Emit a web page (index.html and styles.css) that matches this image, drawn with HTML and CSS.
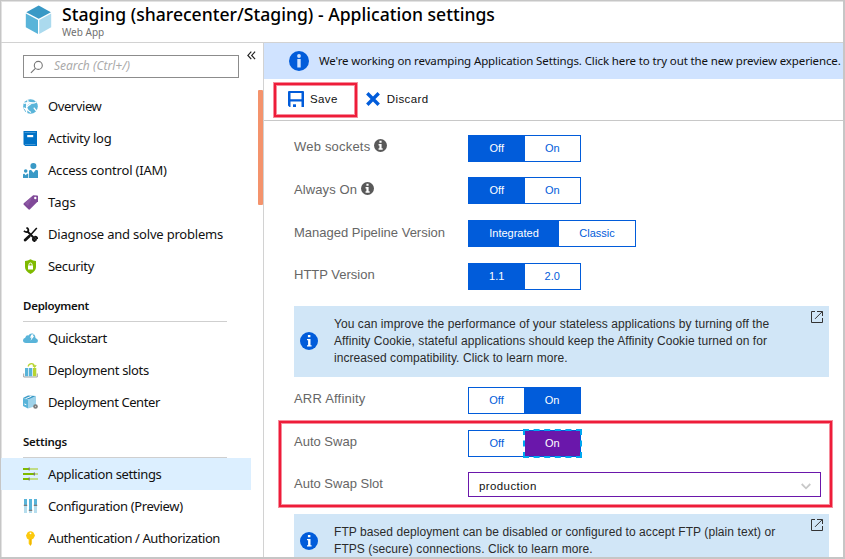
FILE: index.html
```html
<!DOCTYPE html>
<html lang="en">
<head>
<meta charset="utf-8">
<title>Staging - Application settings</title>
<link rel="stylesheet" href="styles.css">
</head>
<body>
<div class="frame">
  <header class="header">
    <svg class="logo" width="28" height="30" viewBox="0 0 28 30"><path fill="#3999c6" d="M13.700.6 25.900 7.300 13.700 13.800 1.300 7.300z"/><path fill="#59b4d9" d="M.8 8.500 13 15v14L.8 22.300z"/><path fill="#abdaee" d="M26.200 8.500 14.200 15v14l12-6.700z"/></svg>
    <div>
      <h1 class="title">Staging (sharecenter/Staging) - Application settings</h1>
      <div class="subtitle">Web App</div>
    </div>
  </header>
  <div class="body">
    <aside class="sidebar">
      <div class="search">
        <svg width="14" height="14" viewBox="0 0 14 14" fill="none" stroke="#777" stroke-width="1.100"><circle cx="8.300" cy="5.400" r="4"/><path d="M5.400 8.300.9 12.800"/></svg>
        <span>Search (Ctrl+/)</span>
      </div>
      <div class="collapse"><svg width="9" height="9" viewBox="0 0 9 9" fill="none" stroke="#222" stroke-width="1.200"><path d="M4.300.7.900 4.400l3.400 3.700M8.100.7 4.700 4.400l3.400 3.700"/></svg></div>
      <div class="scrollbar"></div>
      <nav>
        <a class="item"><svg class="ico" viewBox="0 0 15 15"><circle cx="7.500" cy="7.500" r="7.300" fill="#59b4d9"/><g stroke="#fff" fill="none"><path stroke-width="1.300" d="M1 4.500C4 2.500 8 5 13.500 12M5 .8c-1 2 0 3 5 3.200 2 0 3-.5 3-1.500M.8 9c2 .5 3 2 3 5M4 5c-1 3-.5 6 4 8.500M9 4c-3 1-5 4-6 6"/></g><circle cx="9" cy="7.500" r="2.200" fill="#59b4d9"/><circle cx="4.300" cy="4.600" r="1.500" fill="#fff"/><circle cx="3.700" cy="10.700" r="1.200" fill="#fff"/></svg><span class="s1">Overview</span></a>
        <a class="item"><svg class="ico" viewBox="0 0 15 15"><path fill="#0072c6" d="M1 0h13v15H2.200L.5 13.500V.6z"/><path fill="#fff" d="M4.200 4h6v2.200h-6z"/><path fill="#59a5dc" d="M1.600 1.200h11v.8h-11zM2 13h10.500v.7H2z"/></svg><span class="s2">Activity log</span></a>
        <a class="item"><svg class="ico" viewBox="0 0 15 15" fill="#3999c6"><circle cx="10.400" cy="3" r="3"/><path d="M6 15V8.200Q6 7 7.300 7h.9l2.200 2.800L12.700 7h1Q15 7 15 8.200V15z"/><circle cx="2.700" cy="8" r="1.800"/><path d="M0 15v-3.300q0-1 1-1h.4l1.300 1.500L4 10.700h1.300V15z"/></svg><span class="s3">Access control (IAM)</span></a>
        <a class="item"><svg class="ico" viewBox="0 0 15 15"><path fill="#804998" d="M10.200.3 14.300.4 15 1.100v5.100L7 14.300q-.8.700-1.600 0L.8 9.800q-.8-.8 0-1.600z"/><circle cx="12.300" cy="3" r="1.200" fill="#fff"/><path fill="#9a68af" d="M1.800 8 9.700 1.200 5 11z" opacity=".5"/></svg><span class="s4">Tags</span></a>
        <a class="item"><svg class="ico" viewBox="0 0 15 15" fill="none" stroke="#111"><path stroke-width="1.500" d="M13.800 1 7.500 8"/><path stroke-width="2.800" stroke-linecap="round" d="M6.200 9.200 2.200 13.100"/><path stroke-width="2" d="m4 4 9.500 9.500"/><path stroke-width="1.800" d="M3.400.9Q6 1.500 5.200 4.300 3.300 6 .9 3.900"/><path stroke-width="2" d="M10 11.200Q9.500 14 12.400 14.200M11.300 10Q14 9.200 14.200 12"/></svg><span class="s5">Diagnose and solve problems</span></a>
        <a class="item"><svg class="ico" viewBox="0 0 15 15"><path fill="#7fba00" d="M7.500.2Q10 2 13 2v6q0 4-5.500 6.900Q2 12 2 8V2q3 0 5.500-1.800z"/><path fill="#fff" d="M5 6.500h5v4H5z"/><path fill="none" stroke="#fff" d="M6 6.700V5.500Q6 4 7.500 4T9 5.500v1.200"/></svg><span class="s6">Security</span></a>
        <h2 class="group">Deployment</h2>
        <a class="item"><svg class="ico" viewBox="0 0 15 15"><path fill="#59b4d9" d="M3 12Q0 12 0 9.300q0-2 2.200-2.500Q3 4 5.500 4.400 7 2 9.500 2.500q2.700.5 3 4.500Q15 8 15 9.800 15 12 12.500 12z"/><path fill="#fff" d="m8.400 3.500 2.400-.3-1 2 1.500-.1-3.700 4.600.9-3.100-1.500.1z"/></svg><span class="s7">Quickstart</span></a>
        <a class="item"><svg class="ico" viewBox="0 0 15 15"><path fill="none" stroke="#a0a1a2" d="M.7 10.500V14h13.600v-3.500"/><path fill="#59b4d9" d="M2 5h3.300v8.200H2zM6 5h3.300v8.200H6z"/><path fill="#b8d432" d="M10 5h3.300v8.200H10z"/><path fill="none" stroke="#b8d432" stroke-width="1.100" d="M5 3.500Q6 .6 8.500.6t3.200 3M9.800 2.500l1.900 1.700 1.500-2"/></svg><span class="s8">Deployment slots</span></a>
        <a class="item"><svg class="ico" viewBox="0 0 15 15"><path fill="#3999c6" d="m0 3 5-2.500 8 .6L8 4 5 4.500z"/><path fill="#59b4d9" d="m0 3 5 1.500v9L0 11z"/><path fill="#9fd3ea" d="m5 4.500 8-3.400v10L5 13.500z"/><path stroke="#fff" fill="none" d="m2.500 3.700 6-2.500M1.300 9l2 .7"/><circle cx="12.500" cy="11.500" r="2.300" fill="#7a7a7a"/><circle cx="12.500" cy="11.500" r=".7" fill="#ccc"/></svg><span class="s9">Deployment Center</span></a>
        <h2 class="group">Settings</h2>
        <a class="item selected"><svg class="ico" viewBox="0 0 15 15"><path fill="#7fba00" d="M0 1h6v2H0zM0 6h11v2H0zM0 11h6v2H0z"/><path fill="#c0dc86" d="M6.500 1H15v2H6.500zM11.500 6H15v2h-3.500zM6.500 11H15v2H6.500z"/><path fill="#7a7a7a" d="M5.600.4h1.200v3.200H5.600zM10.700 5.400H12v3.200h-1.300zM5.600 10.400h1.200v3.200H5.600z"/></svg><span class="s10">Application settings</span></a>
        <a class="item"><svg class="ico" viewBox="0 0 15 15"><path fill="#59b4d9" d="M1 0h3v6H1zM6 0h3v11H6zM11 0h3v6h-3z"/><path fill="#b5dded" d="M1 6.500h3V14H1zM6 12h3v2H6zM11 6.500h3V14h-3z"/><path fill="#7a7a7a" d="M.8 5.700h3.400v1.200H.8zM5.800 10.700h3.400v1.200H5.800zM10.800 5.700h3.400v1.200h-3.400z"/></svg><span class="s11">Configuration (Preview)</span></a>
        <a class="item"><svg class="ico" viewBox="0 0 15 15"><path fill="#fcc90d" d="M4.500 1.500Q7.500-1.200 10.500 1.500l1.500 3-1.500 3-1.700 1v4.300L7.500 15l-1.800-2.200V8.500L4 7.500l-1-3z"/><circle cx="7.500" cy="2.300" r=".9" fill="#fff"/><path stroke="#e8a800" stroke-width=".7" d="M7.600 8v6"/></svg><span class="s12">Authentication / Authorization</span></a>
      </nav>
    </aside>
    <main class="main">
      <div class="banner">
        <svg width="20" height="20" viewBox="0 0 20 20"><circle cx="10" cy="10" r="10" fill="#015cda"/><circle cx="10" cy="5" r="1.900" fill="#d0e3ff"/><path fill="#d0e3ff" d="M8.300 8h3.400v8.500H8.300z"/></svg>
        <span>We're working on revamping Application Settings. Click here to try out the new preview experience.</span>
      </div>
      <div class="toolbar">
        <svg width="16" height="16" viewBox="0 0 16 16"><path fill="#015cda" fill-rule="evenodd" d="M1 0h14q1 0 1 1v15h-2.500v-5.500h-11V16H1.500L0 14.500V1q0-1 1-1zM2.500 2v6.300h11V2z"/><path fill="#015cda" d="M5 13.300h3V16H5z"/></svg>
        <span class="save">Save</span>
        <svg class="x" width="14" height="14" viewBox="0 0 14 14" fill="none" stroke="#015cda" stroke-width="3.400"><path d="m1.300 1.300 11.400 11.400M12.700 1.300 1.300 12.700"/></svg>
        <span class="discard">Discard</span>
        <div class="mark mark-save"></div>
      </div>
      <div class="form">
        <div class="row r1"><label class="l1">Web sockets <svg class="tip" viewBox="0 0 12 12"><circle cx="6" cy="6" r="6" fill="#595959"/><path fill="#fff" d="M5 1.700h2v1.700H5zM4.200 4.500H7v4h1V10H4.200V8.500H5V6h-.8z"/></svg></label><div class="toggle"><b class="on">Off</b><b>On</b></div></div>
        <div class="row r2"><label class="l2">Always On <svg class="tip" viewBox="0 0 12 12"><circle cx="6" cy="6" r="6" fill="#595959"/><path fill="#fff" d="M5 1.700h2v1.700H5zM4.200 4.500H7v4h1V10H4.200V8.500H5V6h-.8z"/></svg></label><div class="toggle"><b class="on">Off</b><b>On</b></div></div>
        <div class="row r3"><label class="l3">Managed Pipeline Version</label><div class="toggle wide"><b class="on">Integrated</b><b>Classic</b></div></div>
        <div class="row r4"><label class="l4">HTTP Version</label><div class="toggle"><b class="on">1.1</b><b>2.0</b></div></div>
        <div class="info">
          <svg class="i up" viewBox="0 0 18 18"><circle cx="9" cy="9" r="9" fill="#015cda"/><path fill="#fff" d="M7.900 3h2.500v2.300H7.900zM7 7h3.500v6.300h1.100v1.200H7v-1.200h1.100V8.200H7z"/></svg>
          <p>You can improve the performance of your stateless applications by turning off the<br>Affinity Cookie, stateful applications should keep the Affinity Cookie turned on for<br>increased compatibility. Click to learn more.</p>
          <svg class="ext" viewBox="0 0 12 12" fill="none" stroke="#333"><path d="M4 .5H.5v11h11V7M6 .5h5.500V5M11.200.7 4 7.900"/></svg>
        </div>
        <div class="row r5"><label class="l5">ARR Affinity</label><div class="toggle late"><b>Off</b><b class="on">On</b></div></div>
        <div class="row r6"><label class="l6">Auto Swap</label><div class="toggle"><b>Off</b><b class="on focus">On</b></div></div>
        <div class="row r7"><label class="l7">Auto Swap Slot</label><div class="select"><span>production</span><svg width="10" height="7" viewBox="0 0 10 7" fill="none" stroke="#c8c8c8" stroke-width="1.800"><path d="m.7 1 4.300 4.300L9.300 1"/></svg></div></div>
        <div class="info ftp">
          <svg class="i" viewBox="0 0 18 18"><circle cx="9" cy="9" r="9" fill="#015cda"/><path fill="#fff" d="M7.900 3h2.500v2.300H7.900zM7 7h3.500v6.300h1.100v1.200H7v-1.200h1.100V8.200H7z"/></svg>
          <p>FTP based deployment can be disabled or configured to accept FTP (plain text) or<br>FTPS (secure) connections. Click to learn more.</p>
          <svg class="ext" viewBox="0 0 12 12" fill="none" stroke="#333"><path d="M4 .5H.5v11h11V7M6 .5h5.500V5M11.200.7 4 7.900"/></svg>
        </div>
        <div class="mark mark-swap"></div>
      </div>
    </main>
  </div>
</div>
</body>
</html>
```
FILE: styles.css
```css
* { box-sizing: border-box; }
body { margin: 0; background: #fff; font-family: "Noto Sans", "Open Sans", sans-serif; color: #111; overflow: hidden; }
.frame { width: 845px; height: 559px; border: solid #c6c6c6; border-width: 1px 2px 2px 1px; overflow: hidden; display: flex; flex-direction: column; box-shadow: inset 1px 1px 0 #e2e2e2; }
.header { height: 42px; flex: none; border-bottom: 1px solid #d2d2d2; display: flex; padding: 3px 0 0 24px; }
.logo { margin: 1px 9px 0 0; flex: none; }
.title { margin: 0; font: 500 17.600px/20px "Noto Sans", sans-serif; color: #000; white-space: nowrap; }
.subtitle { font-size: 10px; line-height: 12px; color: #707070; margin-top: 2px; }
.body { flex: 1; display: flex; min-height: 0; }
.sidebar { width: 263px; flex: none; border-right: 1px solid #d2d2d2; position: relative; }
.search { margin: 12px 0 0 22px; width: 216px; height: 23px; border: 1px solid #8c8c8c; display: flex; align-items: center; padding-left: 6px; gap: 10px; color: #aaa; font-size: 12px; font-style: italic; }
.search span { margin-top: -2px; }
.collapse { position: absolute; left: 246px; top: 8px; height: 9px; line-height: 0; }
.scrollbar { position: absolute; right: 0; top: 47px; width: 5px; height: 115px; background: #f4936c; border-radius: 1px; }
nav { padding-top: 12px; }
.item { display: flex; align-items: center; height: 32px; padding-left: 22px; gap: 10px; font-size: 13px; white-space: nowrap; letter-spacing: -.35px; }
.s2 { letter-spacing: -.25px; }
.s3, .s5 { letter-spacing: -.2px; }
.s4 { letter-spacing: 0; }
.s1, .s7, .s9, .s12 { letter-spacing: -.42px; }
.ico { width: 15px; height: 15px; flex: none; }
.selected { background: #dcefff; width: 250px; }
.group { margin: 0 0 0 22px; width: 204px; height: 40px; border-bottom: 1px solid #cfcfcf; font: 600 11.500px/16px "Noto Sans", sans-serif; padding-top: 16px; letter-spacing: -.25px; }
.main { flex: 1; min-width: 0; font-family: "Liberation Sans", Arial, sans-serif; }
.banner { height: 36px; background: #d0e3ff; display: flex; align-items: center; gap: 10px; padding-left: 25px; font: 11.500px "Noto Sans", sans-serif; letter-spacing: -.12px; white-space: nowrap; }
.banner svg { flex: none; }
.banner span { margin-top: -1px; }
.toolbar { height: 42px; border-bottom: 1px solid #c8c8c8; display: flex; align-items: center; padding: 0 0 2px 24px; font-size: 11.500px; position: relative; color: #111; letter-spacing: .4px; }
.save { margin-left: 6px; }
.x { margin-left: 28px; }
.discard { margin-left: 7px; }
.mark { position: absolute; border: 2px solid #ee1c39; box-shadow: 0 0 0 1px rgba(238, 28, 57, .5), inset 0 0 0 1px rgba(238, 28, 57, .5); }
.mark-save { left: 10px; top: 4px; width: 83px; height: 34px; }
.form { position: relative; padding: 14px 0 0 30px; }
.row { display: flex; align-items: flex-start; }
.row label { width: 174px; font-size: 13px; line-height: 16px; padding-top: 4px; color: #666; white-space: nowrap; }
.r1 { height: 42px; } .r2, .r3, .r4 { height: 43px; }
.row .l1 { letter-spacing: .2px; }
.row .l2 { letter-spacing: .1px; padding-top: 5px; }
.row .l3 { padding-top: 5px; }
.row .l5 { letter-spacing: .2px; }
.tip { width: 13px; height: 13px; vertical-align: -1px; }
.toggle { display: flex; width: 113px; height: 27px; border: 1px solid #015cda; font-size: 11px; color: #015cda; }
.toggle b { flex: 1; font-weight: normal; display: flex; align-items: center; justify-content: center; padding-bottom: 1px; }
.toggle .on { background: #015cda; color: #fff; }
.wide { width: 168px; }
.wide b:first-child { flex: 0 0 90px; }
.late b:first-child { flex: 0 0 55px; }
.toggle .focus { background: #6a17ab; outline: 2px dashed #00a8f0; }
.info { width: 535px; height: 71px; background: #d1e6f7; position: relative; display: flex; align-items: center; padding-left: 6px; font-size: 12px; line-height: 17px; letter-spacing: .07px; color: #2b2b2b; white-space: nowrap; }
.info p { margin: 0 0 0 16px; }
.i { width: 18px; height: 18px; flex: none; }
.up { margin-bottom: 1px; }
.ext { position: absolute; right: 6px; top: 5px; width: 12px; height: 12px; }
.r5 { margin-top: 10px; height: 43px; }
.r6 { height: 42px; }
.r7 { height: 42px; }
.select { width: 353px; height: 25px; border: 1px solid #6a17ab; display: flex; align-items: center; justify-content: space-between; padding: 3px 9px 0 10px; font-size: 11.500px; letter-spacing: .4px; color: #111; }
.ftp { height: 54px; }
.mark-swap { left: 15px; top: 300px; width: 553px; height: 86px; }
```
